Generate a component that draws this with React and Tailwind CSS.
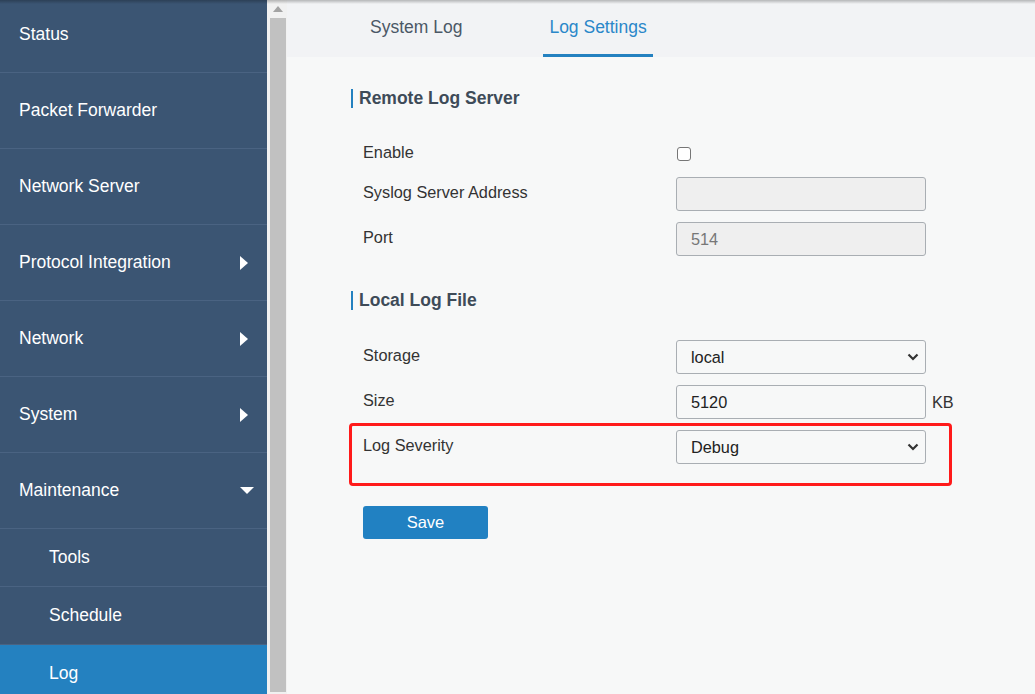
import React from 'react'

const font = { fontFamily: '"Liberation Sans", Arial, sans-serif' }

const NavItem = ({ label, arrow, sub, active, first }) => (
  <div
    className={`flex items-center justify-between border-b border-[#4a6382] ${
      sub ? 'h-[58px] pl-[49px]' : 'h-[76px] pl-[19px]'
    } pr-[19px] ${active ? 'bg-[#2481c0]' : ''} ${first ? 'mt-[-3px]' : ''}`}
  >
    <span className="text-[17.5px] text-white">{label}</span>
    {arrow === 'right' && (
      <svg width="8" height="14" viewBox="0 0 8 14">
        <path d="M0 0 L8 7 L0 14 Z" fill="#fff" />
      </svg>
    )}
    {arrow === 'down' && (
      <svg width="14" height="8" viewBox="0 0 14 8" className="mr-[-6px]">
        <path d="M0 0 L14 0 L7 7 Z" fill="#fff" />
      </svg>
    )}
  </div>
)

const Chevron = () => (
  <svg
    className="absolute right-[7px] top-1/2 -translate-y-1/2 pointer-events-none"
    width="12"
    height="8"
    viewBox="0 0 12 8"
  >
    <path d="M1.5 1.5 L6 6 L10.5 1.5" fill="none" stroke="#333" strokeWidth="2.2" />
  </svg>
)

const Row = ({ label, children, className = '' }) => (
  <div className={`flex items-start ${className}`}>
    <div className="w-[313px] pt-[3px] text-[16.3px] leading-[24px] text-[#333]">{label}</div>
    {children}
  </div>
)

const SectionTitle = ({ children }) => (
  <div className="flex h-[20px] items-center">
    <div className="h-[19px] w-[2px] bg-[#2481c0]" />
    <h3 className="ml-[6px] text-[17.5px] font-bold text-[#3e4b58]">{children}</h3>
  </div>
)

export default function App() {
  const inputBase =
    'h-[34px] w-[250px] rounded-[3px] border border-[#a9aeb3] px-[14px] text-[16.3px] outline-none'

  return (
    <div className="relative flex h-[694px] w-[1035px] overflow-hidden bg-[#f7f8f8]" style={font}>
      {/* top shadow */}
      <div className="pointer-events-none absolute inset-x-0 top-0 h-[4px] bg-gradient-to-b from-[#00000040] to-transparent" />

      {/* sidebar */}
      <aside className="w-[267px] shrink-0 bg-[#3b5573]">
        <NavItem label="Status" first />
        <NavItem label="Packet Forwarder" />
        <NavItem label="Network Server" />
        <NavItem label="Protocol Integration" arrow="right" />
        <NavItem label="Network" arrow="right" />
        <NavItem label="System" arrow="right" />
        <NavItem label="Maintenance" arrow="down" />
        <NavItem label="Tools" sub />
        <NavItem label="Schedule" sub />
        <NavItem label="Log" sub active />
      </aside>

      {/* scrollbar */}
      <div className="flex w-[20px] shrink-0 flex-col border-l-2 border-[#f1f1f1] bg-[#f1f1f1]">
        <div className="flex h-[18px] items-center justify-center">
          <svg width="10" height="6" viewBox="0 0 10 6">
            <path d="M0 6 L5 0 L10 6 Z" fill="#a3a3a3" />
          </svg>
        </div>
        <div className="mx-[1px] mb-[2px] flex-1 bg-[#c1c1c1]" />
      </div>

      {/* main */}
      <main className="flex-1">
        <div className="flex h-[57px] bg-[#f2f3f5] pl-[70px]">
          <div className="flex h-full items-center px-[13px] pb-[2px] text-[17.5px] text-[#4b5866]">System Log</div>
          <div className="ml-[68px] flex h-full flex-col">
            <div className="flex flex-1 items-center px-[6px] pt-[1px] text-[17.5px] text-[#2a87c9]">Log Settings</div>
            <div className="h-[3px] bg-[#2481c0]" />
          </div>
        </div>

        <div className="pl-[64px] pt-[31px]">
          <SectionTitle>Remote Log Server</SectionTitle>

          <div className="ml-[12px] mt-[29px]">
            <Row label="Enable" className="h-[40px]">
              <input
                type="checkbox"
                className="ml-[1px] mt-[10px] h-[14px] w-[14px] appearance-none rounded-[3px] border-[1.5px] border-[#767676] bg-white"
              />
            </Row>
            <Row label="Syslog Server Address" className="h-[45px]">
              <input disabled className={`${inputBase} bg-[#efefef]`} />
            </Row>
            <Row label="Port" className="h-[45px]">
              <input disabled value="514" readOnly className={`${inputBase} bg-[#efefef] text-[#777]`} />
            </Row>
          </div>

          <div className="mt-[23px]">
            <SectionTitle>Local Log File</SectionTitle>
          </div>

          <div className="ml-[12px] mt-[30px]">
            <Row label="Storage" className="h-[45px]">
              <div className="relative">
                <select className={`${inputBase} appearance-none bg-[#f7f8f8] text-[#222]`}>
                  <option>local</option>
                </select>
                <Chevron />
              </div>
            </Row>
            <Row label="Size" className="h-[45px]">
              <input value="5120" readOnly className={`${inputBase} bg-[#f7f8f8] px-[8px] text-[#222]`} />
              <span className="ml-[6px] mt-[5px] text-[16.3px] text-[#333]">KB</span>
            </Row>
          </div>

          <div className="ml-[-2px] mt-[-7px] h-[63px] w-[603px] rounded-[4px] border-[3px] border-[#ff1a1a] pl-[11px] pt-[4px]">
            <Row label="Log Severity">
              <div className="relative">
                <select className={`${inputBase} appearance-none bg-[#f7f8f8] text-[#222]`}>
                  <option>Debug</option>
                </select>
                <Chevron />
              </div>
            </Row>
          </div>

          <button className="ml-[12px] mt-[20px] h-[33px] w-[125px] rounded-[3px] bg-[#2181c2] text-[16.5px] text-white">
            Save
          </button>
        </div>
      </main>
    </div>
  )
}
